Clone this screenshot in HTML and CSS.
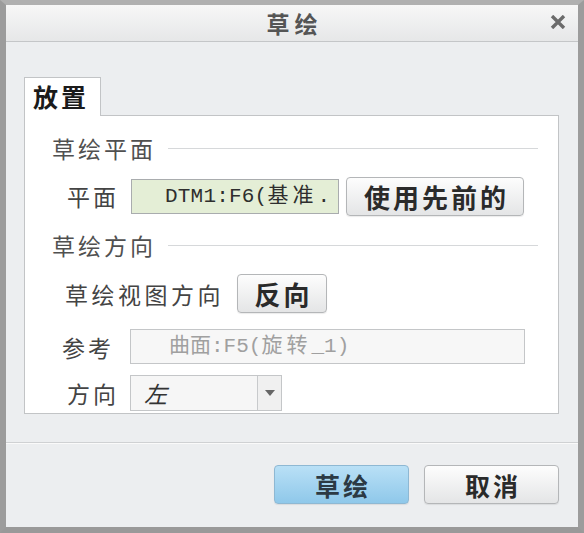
FILE: index.html
```html
<!DOCTYPE html>
<html lang="zh-CN">
<head>
    <meta charset="UTF-8">
    <title>草绘</title>
    <link rel="stylesheet" href="styles.css">
</head>
<body>
    <div class="dialog">
        <div class="title-bar">
            <span class="title">草绘</span>
            <span class="close">
                <svg width="16" height="14" viewBox="0 0 16 14">
                    <path d="M2 1 L14 13 M14 1 L2 13" stroke="#6b6b6b" stroke-width="3.4" stroke-linecap="butt"/>
                </svg>
            </span>
        </div>

        <div class="content">
            <div class="tab">放置</div>
            <div class="panel">
                <div class="section-head"><span>草绘平面</span><i></i></div>
                <div class="row row-plane">
                    <span class="label">平面</span>
                    <div class="field field-green">DTM1:F6(<span class="wide">基准</span>.</div>
                    <button class="btn">使用先前的</button>
                </div>

                <div class="section-head section-two"><span>草绘方向</span><i></i></div>
                <div class="row row-view">
                    <span class="label label-long">草绘视图方向</span>
                    <button class="btn btn-small">反向</button>
                </div>
                <div class="row row-ref">
                    <span class="label">参考</span>
                    <div class="field field-disabled">曲面:F5(<span class="wide">旋转</span>_1)</div>
                </div>
                <div class="row row-dir">
                    <span class="label">方向</span>
                    <div class="select">
                        <span class="select-value">左</span>
                        <span class="select-arrow"></span>
                    </div>
                </div>
            </div>
        </div>

        <div class="footer">
            <button class="btn btn-primary">草绘</button>
            <button class="btn btn-footer">取消</button>
        </div>
    </div>
</body>
</html>
```

FILE: styles.css
```css
* {
    box-sizing: border-box;
}
body {
    margin: 0;
    background: #9a9a9a;
    font-family: "Noto Sans CJK SC", "Noto Sans", sans-serif;
}
.dialog {
    width: 584px;
    height: 533px;
    border: 6px solid #a3a3a3;
    border-top-width: 5px;
    border-color: #b0b0b0 #9c9c9c #999 #9c9c9c;
    background: #eceef0;
    display: flex;
    flex-direction: column;
}
.title-bar {
    height: 37px;
    flex-shrink: 0;
    background: linear-gradient(to bottom, #f7f7f7, #e6e7e8);
    border-bottom: 1px solid #c4c6c8;
    display: flex;
    align-items: center;
    justify-content: center;
    position: relative;
}
.title {
    font-size: 23px;
    font-weight: bold;
    color: #555;
    letter-spacing: 5px;
    margin-left: 5px;
}
.close {
    position: absolute;
    right: 12px;
    top: 10px;
    line-height: 0;
}
.content {
    flex: 1;
    padding: 35px 19px 0 18px;
    border-bottom: 1px solid #cfd1d3;
}
.tab {
    width: 77px;
    height: 39px;
    background: #fff;
    border: 1px solid #c2c4c6;
    border-bottom: none;
    margin-bottom: -1px;
    position: relative;
    z-index: 1;
    font-size: 25px;
    font-weight: bold;
    color: #1b1b1b;
    letter-spacing: 3px;
    padding-left: 8px;
    line-height: 37px;
}
.panel {
    background: #fff;
    border: 1px solid #c2c4c6;
    height: 299px;
    overflow: hidden;
    padding: 18px 20px 0 27px;
    color: #444;
}
.section-head {
    display: flex;
    align-items: center;
    height: 28px;
    font-size: 23px;
    letter-spacing: 3px;
    color: #505050;
}
.section-head i {
    flex: 1;
    height: 1px;
    background: #d6d8da;
    margin-left: 12px;
}
.section-two {
    margin-top: 15px;
}
.row {
    display: flex;
    align-items: center;
    padding-left: 15px;
}
.label {
    width: 63px;
    flex-shrink: 0;
    font-size: 23px;
    letter-spacing: 3px;
    color: #444;
}
.label-long {
    width: auto;
    margin-right: 13px;
    letter-spacing: 3.5px;
}
.row-plane {
    margin-top: 14px;
    height: 40px;
}
.row-plane .label {
    width: 64px;
}
.row-view {
    margin-top: 15px;
    padding-left: 13px;
}
.row-ref {
    margin-top: 16px;
    padding-left: 10px;
}
.row-ref .label {
    width: 68px;
}
.row-dir {
    margin-top: 11px;
}
.field {
    height: 35px;
    border: 1px solid #a9acae;
    font-family: "Liberation Mono", "Noto Sans CJK SC", monospace;
    font-size: 21px;
    line-height: 33px;
    white-space: nowrap;
    overflow: hidden;
}
.field .wide {
    letter-spacing: 4px;
}
.field-green {
    width: 208px;
    background: #e4eed6;
    color: #2e2e2e;
    padding-left: 33px;
    letter-spacing: 0.2px;
}
.field-disabled {
    width: 395px;
    background: #f7f7f7;
    border-color: #c4c6c8;
    color: #a0a0a0;
    padding-left: 38px;
}
.btn {
    font-family: "Noto Sans CJK SC", "Noto Sans", sans-serif;
    font-weight: bold;
    font-size: 26px;
    letter-spacing: 3px;
    color: #2a2a2a;
    background: linear-gradient(to bottom, #fdfdfd, #e4e5e6);
    border: 1px solid #b4b6b8;
    border-radius: 4px;
    box-shadow: 0 1px 1px rgba(0, 0, 0, 0.08);
    padding: 0 0 0 3px;
    cursor: pointer;
}
.row-plane .btn {
    width: 178px;
    height: 39px;
    margin-left: 7px;
}
.btn-small {
    width: 90px;
    height: 39px;
}
.select {
    width: 152px;
    height: 36px;
    border: 1px solid #c4c6c8;
    background: #f6f6f6;
    display: flex;
}
.select-value {
    flex: 1;
    font-size: 23px;
    font-style: italic;
    color: #333;
    padding-left: 13px;
    line-height: 34px;
}
.select-arrow {
    width: 24px;
    border-left: 1px solid #c8cacc;
    background: #f0f0f0;
    display: flex;
    align-items: center;
    justify-content: center;
}
.select-arrow::after {
    content: '';
    border-left: 5px solid transparent;
    border-right: 5px solid transparent;
    border-top: 6px solid #666;
}
.footer {
    height: 84px;
    flex-shrink: 0;
    border-top: 1px solid #fafafa;
    display: flex;
    justify-content: flex-end;
    align-items: flex-start;
    gap: 15px;
    padding: 21px 19px 0 0;
}
.footer .btn {
    width: 135px;
    height: 39px;
    font-size: 25px;
}
.btn-primary {
    background: linear-gradient(to bottom, #b9e0f6, #8fc8ea);
    border-color: #8eb8d3;
    color: #2c3a44;
}
```
